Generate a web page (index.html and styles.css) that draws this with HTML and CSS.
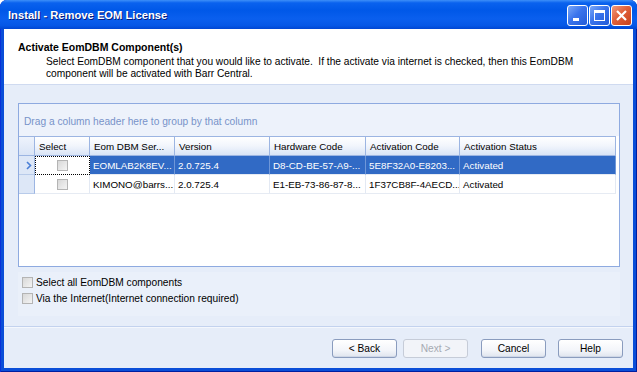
FILE: index.html
```html
<!DOCTYPE html>
<html lang="en">

<head>
    <meta charset="UTF-8">
    <meta name="viewport" content="width=device-width, initial-scale=1.0">
    <title>Install - Remove EOM License</title>
    <link rel="stylesheet" href="styles.css">
</head>

<body>
    <div class="window">
        <div class="titlebar">
            <span class="title">Install - Remove EOM License</span>
            <div class="title-buttons">
                <div class="tbtn">
                    <svg width="19" height="19" viewBox="0 0 19 19"><rect x="5" y="12" width="6" height="3" fill="#fff"/></svg>
                </div>
                <div class="tbtn">
                    <svg width="19" height="19" viewBox="0 0 19 19"><rect x="4.5" y="4.5" width="10" height="10" fill="none" stroke="#fff"/><rect x="4" y="4" width="11" height="3" fill="#fff"/></svg>
                </div>
                <div class="tbtn close">
                    <svg width="19" height="19" viewBox="0 0 19 19"><path d="M5 5 L14 14 M14 5 L5 14" stroke="#fff" stroke-width="2.2"/></svg>
                </div>
            </div>
        </div>
        <div class="client">
            <div class="header">
                <h4>Activate EomDBM Component(s)</h4>
                <p>Select EomDBM component that you would like to activate.&nbsp; If the activate via internet is checked, then this EomDBM<br>component will be activated with Barr Central.</p>
            </div>
            <div class="main">
                <div class="grid">
                    <div class="group-panel">Drag a column header here to group by that column</div>
                    <div class="row head">
                        <div class="cell ind"></div>
                        <div class="cell">Select</div>
                        <div class="cell">Eom DBM Ser...</div>
                        <div class="cell">Version</div>
                        <div class="cell">Hardware Code</div>
                        <div class="cell">Activation Code</div>
                        <div class="cell">Activation Status</div>
                    </div>
                    <div class="row selected">
                        <div class="cell ind">
                            <svg width="8" height="9" viewBox="0 0 8 9"><path d="M2 1 L5.5 4.5 L2 8" fill="none" stroke="#4a7fd6" stroke-width="1.6"/></svg>
                        </div>
                        <div class="cell check focus"><span class="box"></span></div>
                        <div class="cell">EOMLAB2K8EV...</div>
                        <div class="cell">2.0.725.4</div>
                        <div class="cell">D8-CD-BE-57-A9-...</div>
                        <div class="cell">5E8F32A0-E8203...</div>
                        <div class="cell">Activated</div>
                    </div>
                    <div class="row">
                        <div class="cell ind"></div>
                        <div class="cell check"><span class="box"></span></div>
                        <div class="cell">KIMONO@barrs...</div>
                        <div class="cell">2.0.725.4</div>
                        <div class="cell">E1-EB-73-86-87-8...</div>
                        <div class="cell">1F37CB8F-4AECD...</div>
                        <div class="cell">Activated</div>
                    </div>
                    <div class="empty"></div>
                </div>
                <div class="options">
                    <label class="option"><span class="box"></span>Select all EomDBM components</label>
                    <label class="option"><span class="box"></span>Via the Internet(Internet connection required)</label>
                </div>
            </div>
            <div class="footer">
                <button>&lt; Back</button>
                <button class="disabled">Next &gt;</button>
                <button class="wide">Cancel</button>
                <button class="wide">Help</button>
            </div>
        </div>
    </div>
</body>

</html>
```

FILE: styles.css
```css
body {
    margin: 0;
    font-family: "Liberation Sans", Arial, sans-serif;
    font-size: 10.2px;
    color: #000;
    background-color: #fff;
}

.window {
    width: 637px;
    height: 372px;
    display: flex;
    flex-direction: column;
    background-color: #0a4ed8;
    border-radius: 7px 7px 0 0;
    box-sizing: border-box;
    box-shadow: inset 1px 0 0 #0831d9, inset -1px 0 0 #001ea0, inset 0 -1px 0 #001ea0;
}

.titlebar {
    height: 29px;
    display: flex;
    align-items: center;
    justify-content: space-between;
    padding: 0 5px 0 8px;
    border-radius: 7px 7px 0 0;
    background: linear-gradient(to bottom, #3d8ff8 0%, #0a62ee 10%, #0058e8 35%, #0a5fee 65%, #0557e6 88%, #0046d2 100%);
}

.title {
    color: #fff;
    font-weight: bold;
    font-size: 11.2px;
    text-shadow: 1px 1px 0 #0a1c7a;
    margin-top: 1px;
}

.title-buttons {
    display: flex;
    gap: 1px;
    margin-top: 1px;
}

.tbtn {
    width: 19px;
    height: 19px;
    border: 1px solid #fff;
    border-radius: 3px;
    background: linear-gradient(135deg, #7aa8f8 0%, #3a74ec 45%, #225bd8 100%);
}

.tbtn svg {
    display: block;
}

.tbtn.close {
    background: linear-gradient(135deg, #f09a7e 0%, #e0603a 45%, #c8421c 100%);
}

.client {
    flex: 1;
    display: flex;
    flex-direction: column;
    margin: 0 4px 4px 4px;
    background-color: #e6edf9;
}

.header {
    height: 56px;
    box-sizing: border-box;
    background-color: #fff;
    border-bottom: 1px solid #cfdaf0;
    padding: 12px 0 0 14px;
}

.header h4 {
    margin: 0;
    font-size: 10.5px;
    font-weight: bold;
}

.header p {
    margin: 3px 0 0 28px;
    line-height: 12px;
    white-space: nowrap;
}

.main {
    flex: 1;
    padding: 18px 13px 0 14px;
    border-bottom: 1px solid #c3d2ee;
}

.grid {
    height: 164px;
    box-sizing: border-box;
    border: 1px solid #8eaae0;
    display: flex;
    flex-direction: column;
    background-color: #fff;
    font-size: 9.8px;
}

.group-panel {
    height: 32px;
    flex-shrink: 0;
    box-sizing: border-box;
    padding: 12px 0 0 5px;
    color: #7893c9;
    background-color: #edf2fb;
    font-size: 10.2px;
}

.row {
    display: grid;
    grid-template-columns: 16px 55px 85px 95px 96px 94px 156px;
    height: 19px;
    flex-shrink: 0;
}

.row.head {
    height: 20px;
}

.cell {
    display: flex;
    align-items: center;
    padding-left: 3px;
    white-space: nowrap;
    overflow: hidden;
    border-right: 1px solid #e3e9f3;
    border-bottom: 1px solid #e6ebf3;
    box-sizing: border-box;
}

.row.head .cell {
    padding-left: 4px;
    background: linear-gradient(to bottom, #ffffff 0%, #f1f5fc 50%, #d9e4f6 100%);
    border-right: 1px solid #9cb5e2;
    border-bottom: 1px solid #9cb5e2;
    border-top: 1px solid #9cb5e2;
}

.cell.ind {
    padding-left: 6px;
    background-color: #dde7f7;
    border-right: 1px solid #9cb5e2;
    border-bottom: 1px solid #b8cbea;
}

.row.head .cell.ind {
    background: linear-gradient(to bottom, #eef3fc 0%, #d9e4f6 100%);
}

.row.selected .cell {
    background-color: #316ac5;
    color: #fff;
    border-right: 1px solid #6f97d8;
}

.row.selected .cell.ind {
    background-color: #dde7f7;
    border-right: 1px solid #9cb5e2;
}

.row.selected .cell.focus {
    background-color: #fff;
    border: 1px dotted #000;
}

.cell.check {
    justify-content: center;
    padding-left: 0;
}

.box {
    width: 9px;
    height: 9px;
    border: 1px solid #b4b4b4;
    background: linear-gradient(135deg, #d8d8d8 0%, #f4f4f4 100%);
    display: inline-block;
}

.empty {
    flex: 1;
}

.options {
    margin-top: 5px;
    height: 40px;
    padding: 4px 0 0 4px;
    background-color: #eaf0fa;
    display: flex;
    flex-direction: column;
    gap: 4px;
}

.option {
    display: flex;
    align-items: center;
    gap: 3px;
    height: 12px;
}

.footer {
    height: 40px;
    display: flex;
    align-items: center;
    justify-content: flex-end;
    padding-right: 10px;
    border-top: 1px solid #f4f7fd;
}

.footer button {
    width: 65px;
    height: 19px;
    margin-left: 6px;
    font-family: "Liberation Sans", Arial, sans-serif;
    font-size: 10.2px;
    color: #000;
    border: 1px solid #8a9cbe;
    border-radius: 3px;
    background: linear-gradient(to bottom, #ffffff 0%, #f3f5fa 60%, #dfe4ee 100%);
    padding: 0;
    box-shadow: inset 0 -1px 0 #cfd7e6;
}

.footer button.disabled {
    color: #a6aab3;
    border-color: #c6ccd8;
    background: #f2f4f9;
    box-shadow: none;
}

.footer button.wide {
    margin-left: 13px;
}

.footer button.wide + button.wide {
    margin-left: 12px;
}
```
